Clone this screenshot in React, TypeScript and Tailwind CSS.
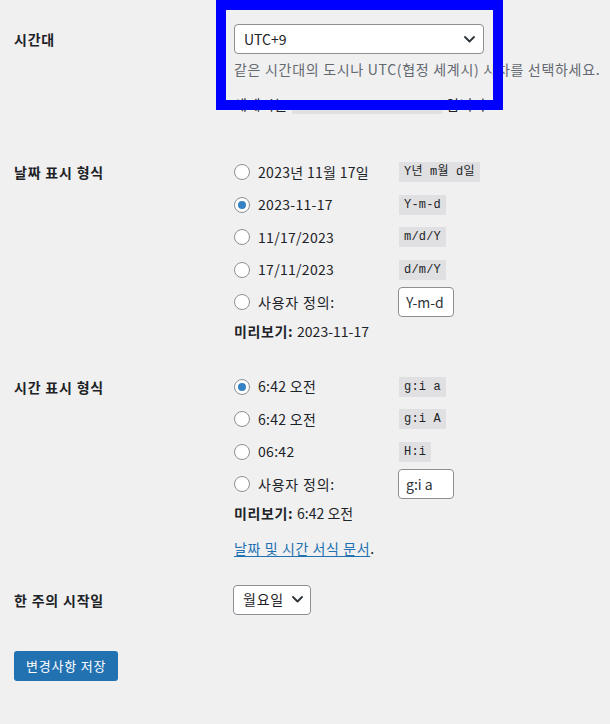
import { useState } from 'react'

const font = 'font-["Noto_Sans_CJK_KR",sans-serif]'
const mono = 'font-["Liberation_Mono","Noto_Sans_CJK_KR",monospace]'

const dateFormats = [
  { label: '2023년 11월 17일', code: 'Y년 m월 d일' },
  { label: '2023-11-17', code: 'Y-m-d' },
  { label: '11/17/2023', code: 'm/d/Y' },
  { label: '17/11/2023', code: 'd/m/Y' },
]

const timeFormats = [
  { label: '6:42 오전', code: 'g:i a' },
  { label: '6:42 오전', code: 'g:i A' },
  { label: '06:42', code: 'H:i' },
]

function Chevron() {
  return (
    <svg width="11" height="7" viewBox="0 0 11 7" fill="none">
      <path d="M1 1l4.5 4.5L10 1" stroke="#2c3338" strokeWidth="1.8" strokeLinecap="round" strokeLinejoin="round" />
    </svg>
  )
}

function Radio({ checked }: { checked: boolean }) {
  return (
    <span className="flex-none w-4 h-4 rounded-full border border-[#8c8f94] bg-white flex items-center justify-center">
      {checked && <span className="w-2 h-2 rounded-full bg-[#3582c4]" />}
    </span>
  )
}

function Code({ children }: { children: string }) {
  return (
    <code className={`${mono} text-[12px] leading-[20px] h-5 px-[5px] bg-[#dcdcde]/80 text-[#1d2327] whitespace-pre tracking-[0.2px]`}>
      {children}
    </code>
  )
}

function FormatList({
  items,
  selected,
  custom,
  preview,
}: {
  items: { label: string; code: string }[]
  selected: number
  custom: string
  preview: string
}) {
  const [value, setValue] = useState(custom)
  return (
    <div>
      {items.map((item, i) => (
        <div key={i} className="h-[32.5px] flex items-center">
          <Radio checked={i === selected} />
          <span className="w-[141px] ml-2 tracking-[0.3px]">{item.label}</span>
          <Code>{item.code}</Code>
        </div>
      ))}
      <div className="h-[32.5px] flex items-center">
        <Radio checked={false} />
        <span className="w-[140px] ml-2 tracking-[0.8px]">사용자 정의:</span>
        <input
          value={value}
          onChange={(e) => setValue(e.target.value)}
          className="w-[56px] h-[30px] px-[7px] bg-white border border-[#8c8f94] rounded text-[14px] text-[#2c3338] outline-none"
        />
      </div>
      <div className="h-[26px] flex items-center">
        <span className="font-bold tracking-[0.6px]">미리보기:</span>
        <span className="ml-1">{preview}</span>
      </div>
    </div>
  )
}

export default function App() {
  return (
    <div className={`${font} relative min-h-[724px] bg-[#f0f0f1] text-[#1d2327] text-[14px] px-[14px]`}>
      {/* Timezone */}
      <div className="flex pt-[24px]">
        <div className="w-[220px] flex-none font-bold leading-[30px] tracking-[0.8px]">시간대</div>
        <div className="flex-1">
          <div className="w-[250px] h-[30px] bg-white border border-[#8c8f94] rounded flex items-center justify-between pl-[9px] pr-[8px]">
            <span>UTC+9</span>
            <Chevron />
          </div>
          <p className="mt-[5px] leading-[20px] text-[#646970] whitespace-nowrap tracking-[0.7px]">
            같은 시간대의 도시나 UTC(협정 세계시) 시차를 선택하세요.
          </p>
          <p className="mt-[15px] leading-[20px] whitespace-nowrap tracking-[0.6px]">
            세계시는 <Code>2023-11-17 06:42:17</Code> 입니다.
          </p>
        </div>
      </div>

      {/* Date format */}
      <div className="flex mt-[39px]">
        <div className="w-[220px] flex-none font-bold leading-[32px] tracking-[0.8px]">날짜 표시 형식</div>
        <FormatList items={dateFormats} selected={1} custom="Y-m-d" preview="2023-11-17" />
      </div>

      {/* Time format */}
      <div className="flex mt-[26px]">
        <div className="w-[220px] flex-none font-bold leading-[32px] tracking-[0.8px]">시간 표시 형식</div>
        <div>
          <FormatList items={timeFormats} selected={0} custom="g:i a" preview="6:42 오전" />
          <p className="mt-[11px] leading-[20px] tracking-[0.6px]">
            <a href="#" className="text-[#2271b1] underline underline-offset-2">날짜 및 시간 서식 문서</a>.
          </p>
        </div>
      </div>

      {/* Start of week */}
      <div className="flex mt-[27px]">
        <div className="w-[219px] flex-none font-bold leading-[30px] tracking-[0.8px]">한 주의 시작일</div>
        <div className="w-[78px] h-[30px] bg-white border border-[#8c8f94] rounded flex items-center justify-between pl-[9px] pr-[7px]">
          <span className="tracking-[0.8px]">월요일</span>
          <Chevron />
        </div>
      </div>

      <button className="mt-[36px] h-[30px] px-[12px] bg-[#2271b1] text-white text-[13px] rounded-[3px] tracking-[0.8px]">
        변경사항 저장
      </button>

      {/* annotation box */}
      <div className="absolute left-[216px] top-0 w-[287px] h-[110px] border-[10px] border-[#0000ff]" />
    </div>
  )
}
